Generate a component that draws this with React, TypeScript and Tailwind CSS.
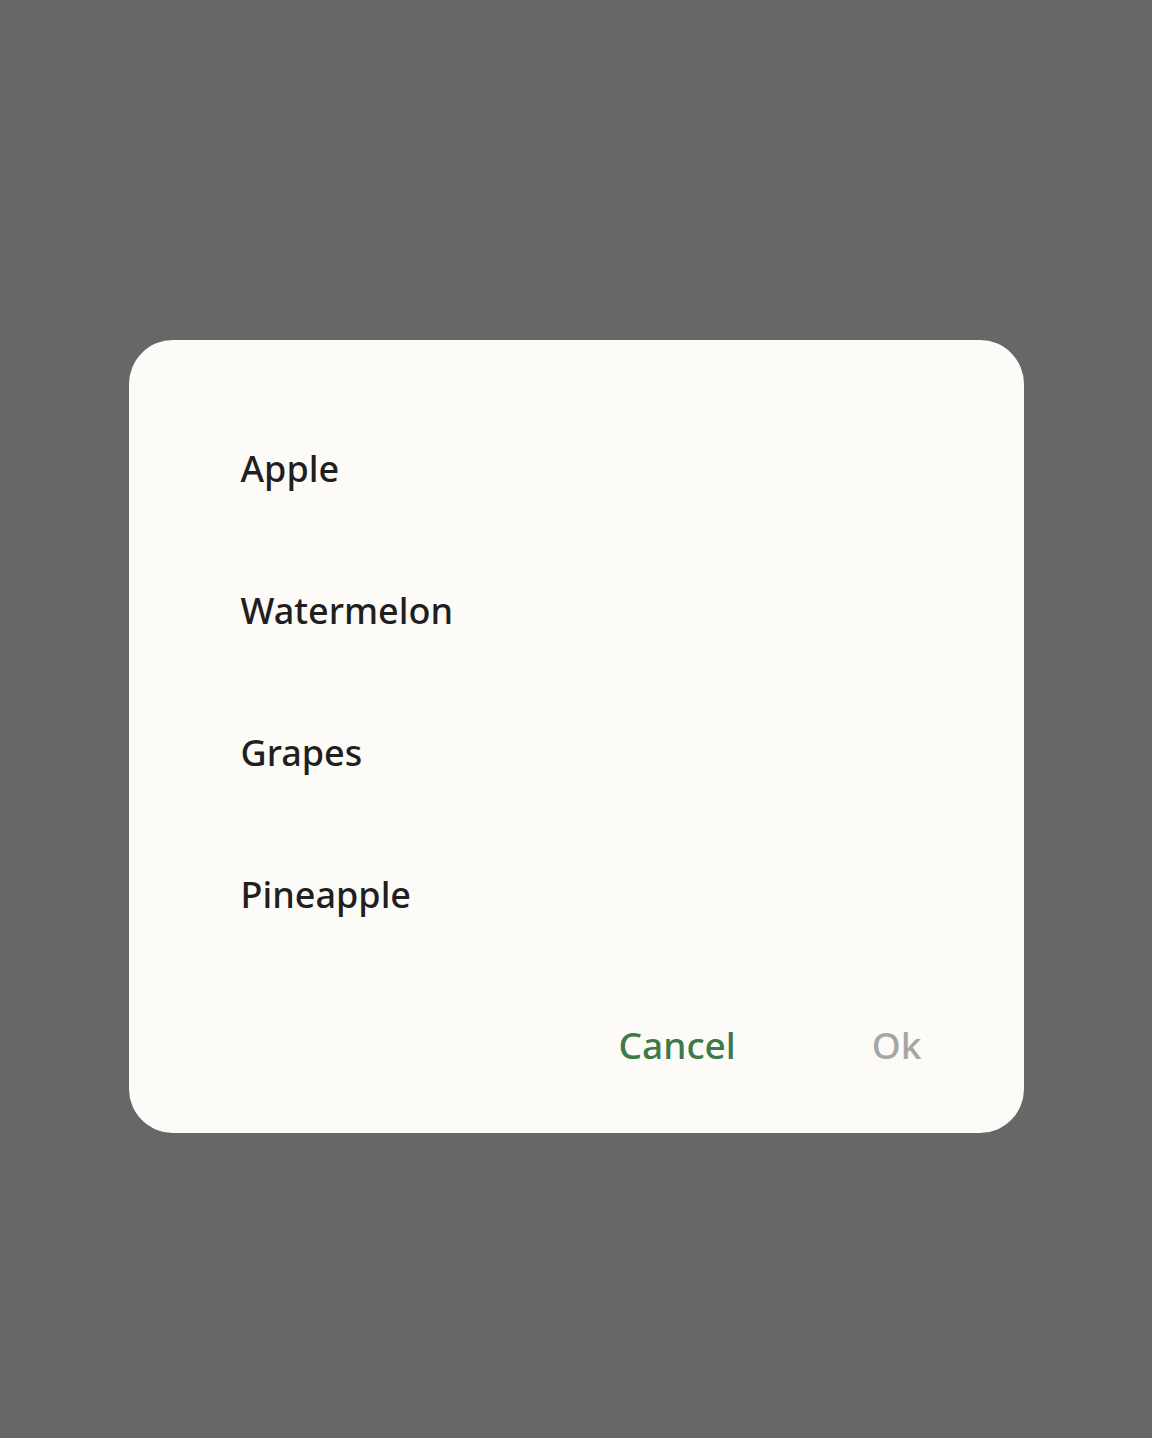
import React from 'react';

const fruits = ['Apple', 'Watermelon', 'Grapes', 'Pineapple'];

export default function App() {
  return (
    <div
      className="min-h-[1438px] w-full bg-[#686666] flex flex-col items-center pt-[340px]"
      style={{ fontFamily: '"Noto Sans", "Open Sans", sans-serif' }}
    >
      <div className="w-[895px] h-[793px] bg-[#fcfbf8] rounded-[44px] flex flex-col">
        <ul className="pt-[58px] pl-[112px]">
          {fruits.map((f) => (
            <li key={f} className="h-[142px] flex items-center text-[36px] font-medium text-[#1f1f1f]">
              {f}
            </li>
          ))}
        </ul>
        <div className="flex justify-end items-center h-[158px] pr-[102px] text-[37px] font-medium">
          <button className="text-[#3d7a49]">Cancel</button>
          <button className="ml-[136px] text-[#a6a6a6]">Ok</button>
        </div>
      </div>
    </div>
  );
}
